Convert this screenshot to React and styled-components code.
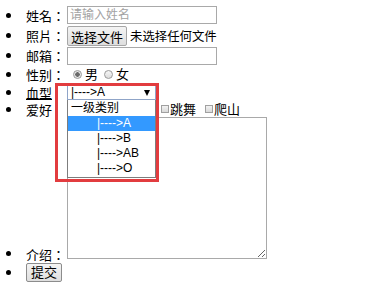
import React from "react";
import styled, { createGlobalStyle } from "styled-components";

const GlobalStyle = createGlobalStyle`
  body {
    margin: 0;
    background: #fff;
    color: #000;
    font-family: "Liberation Sans", "Noto Sans CJK SC", sans-serif;
    font-size: 13px;
  }
`;

// 下拉框遮住了前两个爱好，只画看得见的
const hobbies = ["跳舞", "爬山"];
const bloodTypes = ["A", "B", "AB", "O"];

const App = () => {
  return (
    <>
      <GlobalStyle />
      <Form onSubmit={(e) => e.preventDefault()}>
        <List>
          <Item $h={20}>
            <Label>姓名：</Label>
            <TextInput type="text" placeholder="请输入姓名" />
          </Item>
          <Item $h={21}>
            <Label>照片：</Label>
            <FileButton type="button">选择文件</FileButton>
            <FileHint>未选择任何文件</FileHint>
          </Item>
          <Item $h={19}>
            <Label>邮箱：</Label>
            <TextInput type="email" />
          </Item>
          <Item $h={19}>
            <Label>性别：</Label>
            <Radio type="radio" name="sex" defaultChecked />
            <Choice>男</Choice>
            <Radio type="radio" name="sex" />
            <Choice>女</Choice>
          </Item>
          <Item $h={17} $raised>
            <Label $underline>血型</Label>
            <SelectWrap>
              <SelectBox>
                <SelectText>{"|---->A"}</SelectText>
                <Arrow />
              </SelectBox>
              <DropList>
                <Option>一级类别</Option>
                {bloodTypes.map((t) => (
                  <Option key={t} $indent $active={t === "A"}>
                    {"|---->" + t}
                  </Option>
                ))}
              </DropList>
              {/* 标注用的红框 */}
              <Frame />
            </SelectWrap>
          </Item>
          <Item $h={16}>
            <Label>爱好</Label>
            {hobbies.map((h, i) => (
              <React.Fragment key={h}>
                <Check type="checkbox" $first={i === 0} />
                <Choice $wide>{h}</Choice>
              </React.Fragment>
            ))}
          </Item>
          <Item $h={145} $bottom>
            <Label>介绍：</Label>
            <TextArea />
          </Item>
          <Item $h={20}>
            <SubmitButton type="submit">提交</SubmitButton>
          </Item>
        </List>
      </Form>
    </>
  );
};

const Form = styled.form`
  padding-top: 5px;
`;

const List = styled.ul`
  margin: 0;
  padding: 0;
  list-style: none;
`;

const Item = styled.li`
  display: flex;
  align-items: ${({ $bottom }) => ($bottom ? "flex-end" : "center")};
  height: ${({ $h }) => $h}px;
  position: relative;
  z-index: ${({ $raised }) => ($raised ? 2 : "auto")};

  &::before {
    content: "";
    flex-shrink: 0;
    width: 5px;
    height: 5px;
    border-radius: 50%;
    background: #000;
    margin: ${({ $bottom }) => ($bottom ? "0 15px 6px 6px" : "0 15px 0 6px")};
  }
`;

const Label = styled.span`
  width: 41px;
  flex-shrink: 0;
  line-height: 15px;
  margin-bottom: ${({ $lift }) => ($lift ? 1 : 0)}px;
  white-space: nowrap;
  font-family: "Noto Sans CJK TC", sans-serif;
  text-decoration: ${({ $underline }) => ($underline ? "underline" : "none")};
`;

const TextInput = styled.input`
  box-sizing: border-box;
  width: 150px;
  height: 18px;
  margin: 0;
  padding: 0 2px;
  border: 1px solid #a9a9a9;
  font-family: inherit;
  font-size: 12px;
  outline: none;

  &::placeholder {
    color: #a3a3a3;
  }
`;

const FileButton = styled.button`
  box-sizing: border-box;
  width: 60px;
  height: 20px;
  margin: 0;
  padding: 0;
  border: 1px solid #a6a6a6;
  border-radius: 2px;
  background: linear-gradient(#f4f4f4, #dedede);
  font-family: inherit;
  font-size: 13px;
  color: #000;
`;

const FileHint = styled.span`
  margin-left: 3px;
  font-size: 12.4px;
`;

const Radio = styled.input`
  appearance: none;
  box-sizing: border-box;
  width: 9px;
  height: 9px;
  margin: 0 3px 0 6px;
  border: 1px solid #9a9a9a;
  border-radius: 50%;
  background: linear-gradient(#f6f6f6, #dcdcdc);

  &:checked {
    background: radial-gradient(circle, #6a6a6a 0 2px, #e6e6e6 2.5px);
  }
`;

const Choice = styled.span`
  line-height: 15px;
  margin-right: ${({ $wide }) => ($wide ? 3 : 0)}px;
`;

const Check = styled.input`
  appearance: none;
  box-sizing: border-box;
  width: 8px;
  height: 8px;
  margin: 0 1px 0 ${({ $first }) => ($first ? 94 : 6)}px;
  border: 1px solid #a0a0a0;
  background: linear-gradient(#f2f2f2, #d9d9d9);
`;

const SelectWrap = styled.div`
  position: relative;
`;

const SelectBox = styled.div`
  box-sizing: border-box;
  width: 89px;
  height: 15px;
  display: flex;
  align-items: center;
  justify-content: space-between;
  padding: 0 5px 0 3px;
  border: 1px solid #8fa4c8;
  background: #fff;
`;

const SelectText = styled.span`
  font-size: 12px;
  line-height: 13px;
`;

const Arrow = styled.span`
  width: 0;
  height: 0;
  border-left: 3.5px solid transparent;
  border-right: 3.5px solid transparent;
  border-top: 6px solid #000;
`;

const DropList = styled.div`
  position: absolute;
  top: 15px;
  left: 0;
  box-sizing: border-box;
  width: 89px;
  padding: 1px 0;
  border: 1px solid #7d7d7d;
  border-top: none;
  background: #fff;
`;

const Option = styled.div`
  height: 15px;
  line-height: 15px;
  padding-left: ${({ $indent }) => ($indent ? 29 : 3)}px;
  font-size: 12px;
  color: ${({ $active }) => ($active ? "#fff" : "#000")};
  background: ${({ $active }) => ($active ? "#3399ff" : "transparent")};
  white-space: nowrap;
`;

const Frame = styled.div`
  position: absolute;
  left: -12px;
  top: -2px;
  box-sizing: border-box;
  width: 104px;
  height: 99px;
  border: 3px solid #e23c3f;
  pointer-events: none;
`;

const TextArea = styled.textarea`
  box-sizing: border-box;
  width: 200px;
  height: 142px;
  margin: 0 0 3px;
  border: 1px solid #a9a9a9;
  outline: none;
  resize: both;
`;

const SubmitButton = styled.button`
  box-sizing: border-box;
  height: 19px;
  margin: 1px 0 0;
  padding: 0 4px;
  border: 1px solid #8c8c8c;
  border-radius: 2px;
  background: linear-gradient(#f4f4f4, #dedede);
  font-family: inherit;
  font-size: 13px;
  line-height: 15px;
  color: #000;
`;

export default App;
